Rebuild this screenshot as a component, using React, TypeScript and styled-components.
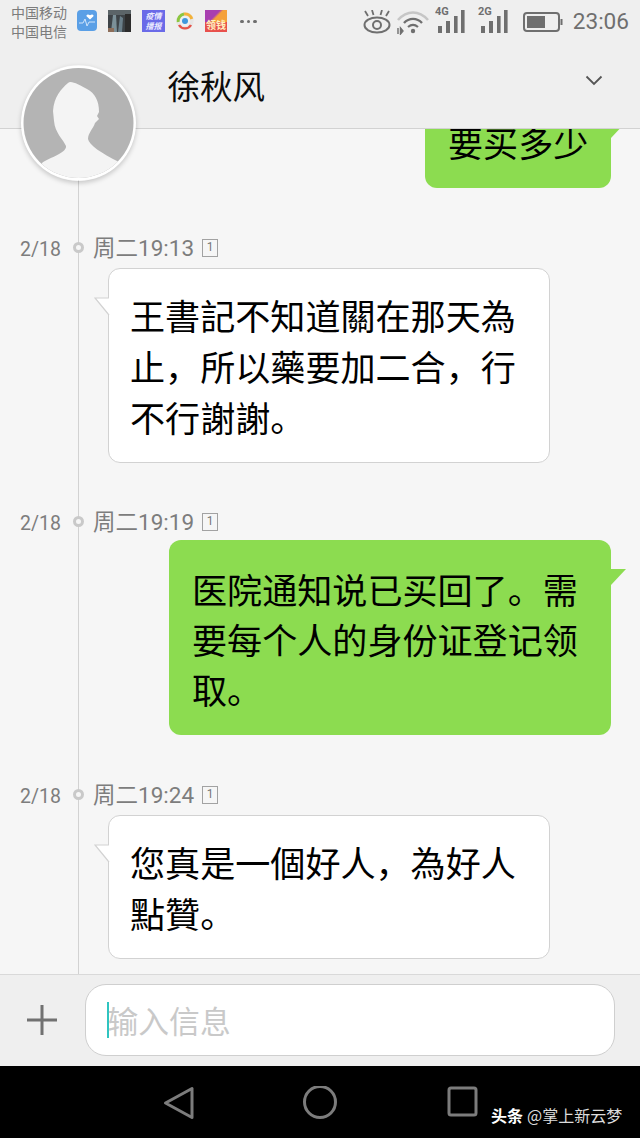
import React from "react";
import styled, { createGlobalStyle } from "styled-components";

const CJK = `"Noto Sans CJK SC", "Noto Sans CJK TC", sans-serif`;

const Global = createGlobalStyle`
  html, body { margin: 0; padding: 0; background: #f6f6f6; }
  * { box-sizing: border-box; }
  #root { width: 640px; height: 1138px; overflow: hidden; }
`;

const Screen = styled.div`
  width: 640px;
  height: 1138px;
  display: flex;
  flex-direction: column;
  position: relative;
  font-family: ${CJK};
  overflow: hidden;
`;

const Top = styled.header`
  height: 129px;
  flex: none;
  background: #efefef;
  border-bottom: 1px solid #d2d2d2;
  position: relative;
  z-index: 3;
  display: flex;
  flex-direction: column;
`;

const StatusBar = styled.div`
  height: 44px;
  flex: none;
  display: flex;
  align-items: flex-start;
  padding: 3px 11px 0 11px;
`;

const Carriers = styled.div`
  width: 58px;
  font-size: 14px;
  line-height: 19px;
  color: #7c7c7c;
  flex: none;
`;

const AppIcons = styled.div`
  display: flex;
  align-items: center;
  height: 35px;
  margin-left: 8px;
  gap: 11px;
`;

const HeartTile = styled.svg`
  display: block;
  flex: none;
`;

const PromoTile = styled.div`
  width: 23px;
  height: 22px;
  background: #6a6ae8;
  color: #e9e9ff;
  font-size: 8px;
  line-height: 10px;
  font-weight: 700;
  font-style: italic;
  text-align: center;
  padding-top: 1px;
`;

const MoneyTile = styled.div`
  width: 22px;
  height: 22px;
  background: linear-gradient(135deg, #a83fb0 0 45%, #f5a13a 55% 100%);
  border-bottom: 10px solid #e8504c;
  position: relative;
`;

const MoneyLabel = styled.span`
  position: absolute;
  left: 0;
  right: 0;
  top: 9px;
  font-size: 10px;
  line-height: 12px;
  font-weight: 700;
  color: #fff2c0;
  text-align: center;
`;

const Dots = styled.div`
  display: flex;
  gap: 3px;
  margin-left: 2px;
  margin-top: 2px;
`;

const Dot = styled.i`
  width: 3.5px;
  height: 3.5px;
  border-radius: 50%;
  background: #6e6e6e;
  display: block;
`;

const StatusRight = styled.div`
  margin-left: auto;
  display: flex;
  align-items: center;
  height: 37px;
`;

const StatusGlyph = styled.svg<{ $gap?: number; $lift?: number }>`
  display: block;
  flex: none;
  margin-left: ${(p) => p.$gap ?? 0}px;
  margin-top: ${(p) => -(p.$lift ?? 0)}px;
`;

const Clock = styled.span`
  font-family: Roboto, sans-serif;
  font-size: 22.6px;
  color: #6f6f6f;
  margin-left: 10px;
`;

const TitleRow = styled.div`
  flex: 1;
  display: flex;
  align-items: flex-start;
  padding: 18px 37px 0 167.5px;
  justify-content: space-between;
`;

const Title = styled.h1`
  margin: 0;
  font-size: 32.5px;
  line-height: 46px;
  font-weight: 400;
  color: #0c0c0c;
`;

const Chevron = styled.svg`
  display: block;
  margin-top: 13px;
`;

const Avatar = styled.svg`
  position: absolute;
  left: 21px;
  top: 65px;
  border-radius: 50%;
  box-shadow: 0 2px 5px rgba(0, 0, 0, 0.2);
  z-index: 4;
`;

const Chat = styled.main`
  flex: 1;
  min-height: 0;
  background: #f6f6f6;
  position: relative;
  overflow: hidden;
  display: flex;
  flex-direction: column;
`;

const Rail = styled.div`
  position: absolute;
  left: 78px;
  top: 0;
  bottom: 0;
  width: 1px;
  background: #d2d2d2;
`;

const Message = styled.section<{ $first?: boolean; $gap?: number }>`
  position: relative;
  display: flex;
  flex-direction: column;
  margin-top: ${(p) => (p.$first ? "-36px" : `${p.$gap ?? 45}px`)};
`;

const TimeRow = styled.div`
  height: 30px;
  display: flex;
  align-items: center;
  padding-left: 20px;
  color: #7d7d7d;
`;

const DateLabel = styled.span`
  width: 53px;
  font-family: Roboto, sans-serif;
  font-size: 19.5px;
  margin-top: 2px;
`;

const RailDot = styled.i`
  width: 11px;
  height: 11px;
  border: 3px solid #c9c9c9;
  border-radius: 50%;
  background: #f6f6f6;
  display: block;
  position: relative;
  margin-left: -0.5px;
  margin-top: -1px;
`;

const TimeLabel = styled.span`
  margin-left: 9.5px;
  font-family: Roboto, ${CJK};
  font-size: 22.5px;
  line-height: 30px;
`;

const Sim = styled.span`
  width: 16px;
  height: 18px;
  margin-left: 8px;
  margin-top: -1px;
  border: 1.5px solid #a2a2a2;
  font-family: Roboto, sans-serif;
  font-size: 12px;
  line-height: 15px;
  text-align: center;
  color: #777;
`;

const Bubble = styled.div<{ $mine?: boolean }>`
  position: relative;
  width: 442px;
  margin-top: ${(p) => (p.$mine ? "3px" : "5px")};
  margin-left: ${(p) => (p.$mine ? "169px" : "108px")};
  padding: ${(p) => (p.$mine ? "24px 20px 21px 23px" : "20px 20px 20px 21px")};
  border-radius: 12px;
  font-size: 35.1px;
  line-height: ${(p) => (p.$mine ? "50px" : "51px")};
  color: #000;
  background: ${(p) => (p.$mine ? "#8cdc50" : "#fff")};
  border: ${(p) => (p.$mine ? "none" : "1px solid #d2d2d2")};
`;

const FirstBubble = styled(Bubble)`
  width: 186px;
  margin-left: 425px;
  margin-top: 0;
`;

const Tail = styled.svg<{ $mine?: boolean }>`
  position: absolute;
  top: 28px;
  ${(p) => (p.$mine ? "left: 100%;" : "right: 100%; margin-right: -1px;")}
  display: block;
`;

const Composer = styled.footer`
  height: 92px;
  flex: none;
  background: #efefef;
  border-top: 1px solid #d9d9d9;
  display: flex;
  align-items: center;
  padding: 0 25px 2px 27px;
  gap: 27px;
  position: relative;
  z-index: 2;
`;

const PlusIcon = styled.svg`
  display: block;
  flex: none;
  margin-left: -1px;
`;

const InputBox = styled.div`
  flex: 1;
  height: 72px;
  background: #fff;
  border: 1.5px solid #cfcfcf;
  border-radius: 21px;
  display: flex;
  align-items: center;
  padding-left: 21px;
`;

const Caret = styled.i`
  width: 2px;
  height: 36px;
  background: #2fc4c0;
  display: block;
  flex: none;
`;

const Placeholder = styled.span`
  font-size: 30.8px;
  margin-left: -1.5px;
  color: #c9c9c9;
  line-height: 40px;
`;

const NavBar = styled.nav`
  height: 72px;
  flex: none;
  background: #000;
  display: flex;
  align-items: flex-start;
  position: relative;
  padding: 20px 0 0 163px;
`;

const NavIcon = styled.svg<{ $gap?: number }>`
  display: block;
  flex: none;
  margin-left: ${(p) => p.$gap ?? 0}px;
`;

const Watermark = styled.div`
  position: absolute;
  left: 491px;
  top: 38px;
  font-size: 16px;
  line-height: 22px;
  color: #dcdcdc;
  white-space: nowrap;
`;

const WatermarkBrand = styled.b`
  color: #fff;
  font-weight: 700;
  margin-right: 4px;
`;

const TailSvg = ({ mine }: { mine?: boolean }) =>
  mine ? (
    <Tail $mine width="15" height="18" viewBox="0 0 15 18">
      <path d="M0 1 H15 L0 17 Z" fill="#8cdc50" />
    </Tail>
  ) : (
    <Tail width="16" height="20" viewBox="0 0 16 20">
      <path d="M15 1 H1 L15 18" fill="#fff" stroke="#d2d2d2" strokeWidth="1.2" />
      <path d="M15.6 1.6 V17" stroke="#fff" strokeWidth="1.6" />
    </Tail>
  );

const Time = ({ t }: { t: string }) => (
  <TimeRow>
    <DateLabel>2/18</DateLabel>
    <RailDot />
    <TimeLabel>周二{t}</TimeLabel>
    <Sim>1</Sim>
  </TimeRow>
);

const Signal = ({ label, gap }: { label: string; gap: number }) => (
  <StatusGlyph $gap={gap} $lift={4} width="30" height="30" viewBox="0 0 30 30">
    <text x="0" y="10" fontSize="11" fontWeight="700" fontFamily="Roboto, sans-serif" fill="#6f6f6f">
      {label}
    </text>
    <rect x="3" y="21" width="4" height="7" fill="#6f6f6f" />
    <rect x="11" y="16" width="4" height="12" fill="#6f6f6f" />
    <rect x="19" y="11" width="3.6" height="17" fill="#6f6f6f" />
    <rect x="26" y="5" width="3.6" height="23" fill="#6f6f6f" />
  </StatusGlyph>
);

export default function App() {
  return (
    <Screen>
      <Global />
      <Top>
        <StatusBar>
          <Carriers>
            中国移动
            <br />
            中国电信
          </Carriers>
          <AppIcons>
            <HeartTile width="20" height="21" viewBox="0 0 20 21">
              <rect width="20" height="21" rx="4" fill="#5a9fe6" />
              <path d="M2 13 H6 L8 9 L10 16 L12 12 H18" fill="none" stroke="#cfe4fb" strokeWidth="1" />
              <path d="M13 9.5 L9.8 6.6 C8.6 5 10.6 3.4 13 5.2 C15.4 3.4 17.4 5 16.2 6.6 Z" fill="#fff" />
            </HeartTile>
            <HeartTile width="23" height="22" viewBox="0 0 23 22">
              <rect width="23" height="22" fill="#3d4347" />
              <rect x="0" y="0" width="23" height="5" fill="#5b6468" />
              <path d="M3 22 L5 5 L8 5 L9 22 Z" fill="#7b9098" />
              <path d="M10 22 L12 6 L15 8 L14 22 Z" fill="#6a7f8a" />
              <rect x="0" y="18" width="6" height="4" fill="#8d6e5a" />
              <rect x="17" y="4" width="6" height="18" fill="#2c2c2c" />
            </HeartTile>
            <PromoTile>
              疫情
              <br />
              播报
            </PromoTile>
            <HeartTile width="18" height="20" viewBox="0 0 18 20">
              <circle cx="9" cy="10" r="7" fill="none" stroke="#e6e6e6" strokeWidth="3.4" />
              <path d="M2.2 11 A7 7 0 0 1 8 3" fill="none" stroke="#8cc63f" strokeWidth="3" />
              <path d="M8 3 A7 7 0 0 1 15.8 8" fill="none" stroke="#f3b23a" strokeWidth="3" />
              <path d="M3 14 A7 7 0 0 0 15 14" fill="none" stroke="#e4544a" strokeWidth="2.4" />
              <circle cx="9" cy="10" r="3" fill="#3f97dd" />
            </HeartTile>
            <MoneyTile>
              <MoneyLabel>领钱</MoneyLabel>
            </MoneyTile>
            <Dots>
              <Dot />
              <Dot />
              <Dot />
            </Dots>
          </AppIcons>
          <StatusRight>
            <StatusGlyph width="30" height="24" viewBox="0 0 30 24">
              <ellipse cx="15" cy="15" rx="12.5" ry="7.5" fill="none" stroke="#6f6f6f" strokeWidth="2" />
              <circle cx="15" cy="15" r="4" fill="none" stroke="#6f6f6f" strokeWidth="2" />
              <path d="M3 1 L6 6 M10 0 L11.5 5 M20 0 L18.5 5 M27 1 L24 6" stroke="#6f6f6f" strokeWidth="1.8" />
            </StatusGlyph>
            <StatusGlyph $gap={3} width="34" height="26" viewBox="0 0 34 26">
              <path d="M3 11 C12 1 24 1 33 11" fill="none" stroke="#c6c6c6" strokeWidth="2.6" />
              <path d="M9 14 C14 8.5 22 8.5 27 14" fill="none" stroke="#6f6f6f" strokeWidth="2.4" />
              <path d="M13 18 C16 15.5 20 15.5 23 18" fill="none" stroke="#6f6f6f" strokeWidth="2.2" />
              <circle cx="18" cy="22" r="2.2" fill="#6f6f6f" />
              <path d="M3 19 V25 M5.5 19 L8 22 L5.5 25 Z" stroke="#6f6f6f" strokeWidth="1.4" fill="#6f6f6f" />
            </StatusGlyph>
            <Signal label="4G" gap={6} />
            <Signal label="2G" gap={13} />
            <StatusGlyph $gap={15} width="40" height="22" viewBox="0 0 40 22">
              <rect x="1" y="2" width="35" height="18" rx="3" fill="none" stroke="#6f6f6f" strokeWidth="2" />
              <rect x="4" y="5" width="18" height="12" fill="#6f6f6f" />
              <rect x="37.5" y="8" width="2" height="6" fill="#6f6f6f" />
            </StatusGlyph>
            <Clock>23:06</Clock>
          </StatusRight>
        </StatusBar>
        <TitleRow>
          <Title>徐秋风</Title>
          <Chevron width="18" height="11" viewBox="0 0 18 11">
            <path d="M1.5 1.5 L9 9 L16.5 1.5" fill="none" stroke="#555" strokeWidth="1.8" />
          </Chevron>
        </TitleRow>
      </Top>
      <Avatar width="115" height="116" viewBox="0 0 115 116">
        <circle cx="57.5" cy="58" r="57.5" fill="#fff" />
        <circle cx="57.5" cy="58" r="55" fill="#b4b4b4" />
        <clipPath id="face">
          <circle cx="57.5" cy="58" r="55" />
        </clipPath>
        <path
          clipPath="url(#face)"
          d="M47 18 C50 15 58 20 66 24 C74 28 78 36 78 47 L76 51 L78 54 L74 58 C72 64 67 68 67 74 C68 80 80 88 98 97 L100 120 L15 120 L21 98 C30 92 46 88 45 81 C42 74 34 68 33 56 L32 46 C33 32 40 24 47 18 Z"
          fill="#f4f4f4"
        />
      </Avatar>
      <Chat>
        <Rail />
        <Message $first>
          <FirstBubble $mine>
            要买多少
            <TailSvg mine />
          </FirstBubble>
        </Message>
        <Message>
          <Time t="19:13" />
          <Bubble>
            王書記不知道關在那天為止，所以藥要加二合，行不行謝謝。
            <TailSvg />
          </Bubble>
        </Message>
        <Message $gap={44}>
          <Time t="19:19" />
          <Bubble $mine>
            医院通知说已买回了。需要每个人的身份证登记领取。
            <TailSvg mine />
          </Bubble>
        </Message>
        <Message>
          <Time t="19:24" />
          <Bubble>
            您真是一個好人，為好人點贊。
            <TailSvg />
          </Bubble>
        </Message>
      </Chat>
      <Composer>
        <PlusIcon width="32" height="32" viewBox="0 0 32 32">
          <path d="M16 1 V31 M1 16 H31" stroke="#717171" strokeWidth="3" />
        </PlusIcon>
        <InputBox>
          <Caret />
          <Placeholder>输入信息</Placeholder>
        </InputBox>
      </Composer>
      <NavBar>
        <NavIcon width="32" height="34" viewBox="0 0 32 34">
          <path d="M29 2.5 V31.5 L2.5 17 Z" fill="none" stroke="#7c7c7c" strokeWidth="3" strokeLinejoin="round" />
        </NavIcon>
        <NavIcon $gap={107} width="36" height="36" viewBox="0 0 36 36">
          <circle cx="18" cy="16" r="15.5" fill="none" stroke="#7c7c7c" strokeWidth="3" />
        </NavIcon>
        <NavIcon $gap={108} width="32" height="32" viewBox="0 0 32 32">
          <rect x="3" y="2" width="27" height="27" rx="2" fill="none" stroke="#7c7c7c" strokeWidth="3" />
        </NavIcon>
        <Watermark>
          <WatermarkBrand>头条</WatermarkBrand>@掌上新云梦
        </Watermark>
      </NavBar>
    </Screen>
  );
}
